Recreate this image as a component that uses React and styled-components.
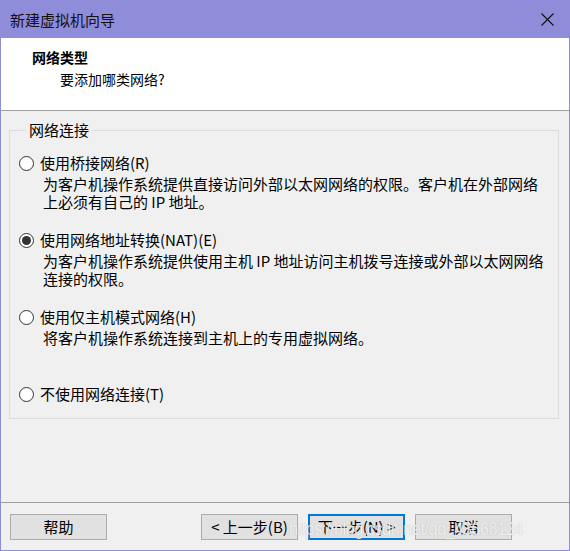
import React, { useState } from 'react';
import styled, { createGlobalStyle } from 'styled-components';

const GlobalStyle = createGlobalStyle`
  html, body {
    margin: 0;
    padding: 0;
    background: #f0f0f0;
  }
  * {
    box-sizing: border-box;
  }
`;

const FONT = `"Noto Sans CJK SC", "Noto Sans", sans-serif`;

const Window = styled.div`
  position: relative;
  width: 570px;
  height: 551px;
  border: 1px solid #8f8cd9;
  background: #f0f0f0;
  display: flex;
  flex-direction: column;
  font-family: ${FONT};
  font-size: 15px;
  color: #000;
  overflow: hidden;
`;

const TitleBar = styled.div`
  height: 37px;
  flex: none;
  background: #8f8cd9;
  display: flex;
  align-items: center;
  justify-content: space-between;
  padding: 0 15px 0 9px;
  color: #111;
  line-height: 20px;
`;

const CloseButton = styled.button`
  border: 0;
  background: transparent;
  padding: 0;
  width: 14px;
  height: 14px;
  display: flex;
  align-items: center;
  justify-content: center;
  cursor: pointer;
`;

const Header = styled.div`
  height: 73px;
  flex: none;
  background: #fff;
  border-bottom: 1px solid #a0a0a0;
  padding: 9px 0 0 31px;
  display: flex;
  flex-direction: column;
  gap: 2px;
  line-height: 20px;
`;

const HeaderTitle = styled.div`
  font-weight: 700;
  font-size: 14px;
`;

const HeaderSub = styled.div`
  padding-left: 28px;
  font-size: 14px;
`;

const Body = styled.div`
  flex: 1;
  padding: 9px 10px 0 8px;
`;

const GroupBox = styled.fieldset`
  margin: 0;
  height: 299px;
  border: 1px solid #dcdcdc;
  padding: 13px 0 0 9px;
  min-width: 0;
  display: flex;
  flex-direction: column;
  gap: 19px;
`;

const Legend = styled.legend`
  margin-left: 7px;
  padding: 0 3px;
  line-height: 20px;
`;

const Option = styled.div`
  display: flex;
  flex-direction: column;
  gap: 2px;
`;

const OptionRow = styled.label`
  display: flex;
  align-items: center;
  gap: 6px;
  height: 20px;
  line-height: 20px;
  cursor: default;
`;

const Radio = styled.span`
  width: 15px;
  height: 15px;
  border-radius: 50%;
  border: 1px solid #333;
  background: #fff;
  display: flex;
  align-items: center;
  justify-content: center;
  flex: none;

  &::after {
    content: '';
    width: 9px;
    height: 9px;
    border-radius: 50%;
    background: ${p => (p.$checked ? '#333' : 'transparent')};
  }
`;

const Description = styled.div`
  padding-left: 24px;
  line-height: 18px;
  min-height: 36px;
  padding-right: 12px;
`;

const Footer = styled.div`
  height: 48px;
  flex: none;
  border-top: 1px solid #a0a0a0;
  padding: 11px 57px 0 9px;
  display: flex;
  justify-content: space-between;
  align-items: flex-start;
`;

const ButtonGroup = styled.div`
  display: flex;
  gap: 10px;
`;

const Button = styled.button`
  width: 97px;
  height: 26px;
  background: #e1e1e1;
  border: ${p => (p.$default ? '2px solid #0078d7' : '1px solid #adadad')};
  font-family: ${FONT};
  font-size: 15px;
  color: #000;
  padding: 0;
  line-height: 20px;
  cursor: pointer;
`;

const Watermark = styled.div`
  position: absolute;
  left: 288px;
  top: 517px;
  font-family: "Liberation Sans", Arial, sans-serif;
  font-size: 19px;
  letter-spacing: -0.6px;
  transform: scaleX(0.86);
  transform-origin: left center;
  color: rgba(255, 255, 255, 0.8);
  text-shadow: 0 0 1px rgba(120, 120, 120, 0.5);
  pointer-events: none;
  white-space: nowrap;
`;

const options = [
  {
    id: 'bridged',
    label: '使用桥接网络(R)',
    desc: '为客户机操作系统提供直接访问外部以太网网络的权限。客户机在外部网络上必须有自己的 IP 地址。',
  },
  {
    id: 'nat',
    label: '使用网络地址转换(NAT)(E)',
    desc: '为客户机操作系统提供使用主机 IP 地址访问主机拨号连接或外部以太网网络连接的权限。',
  },
  {
    id: 'host',
    label: '使用仅主机模式网络(H)',
    desc: '将客户机操作系统连接到主机上的专用虚拟网络。',
  },
  {
    id: 'none',
    label: '不使用网络连接(T)',
  },
];

function App() {
  const [selected, setSelected] = useState('nat');

  return (
    <>
      <GlobalStyle />
      <Window>
        <TitleBar>
          <span>新建虚拟机向导</span>
          <CloseButton aria-label="关闭">
            <svg width="13" height="13" viewBox="0 0 13 13">
              <path d="M0.5 0.5 L12.5 12.5 M12.5 0.5 L0.5 12.5" stroke="#111" strokeWidth="1.1" />
            </svg>
          </CloseButton>
        </TitleBar>

        <Header>
          <HeaderTitle>网络类型</HeaderTitle>
          <HeaderSub>要添加哪类网络?</HeaderSub>
        </Header>

        <Body>
          <GroupBox>
            <Legend>网络连接</Legend>
            {options.map(opt => (
              <Option key={opt.id}>
                <OptionRow onClick={() => setSelected(opt.id)}>
                  <Radio $checked={selected === opt.id} />
                  <span>{opt.label}</span>
                </OptionRow>
                {opt.desc && <Description>{opt.desc}</Description>}
              </Option>
            ))}
          </GroupBox>
        </Body>

        <Footer>
          <Button>帮助</Button>
          <ButtonGroup>
            <Button>&lt; 上一步(B)</Button>
            <Button $default>下一步(N) &gt;</Button>
            <Button>取消</Button>
          </ButtonGroup>
        </Footer>

        <Watermark>https://blog.csdn.net/qq_43668124</Watermark>
      </Window>
    </>
  );
}

export default App;
